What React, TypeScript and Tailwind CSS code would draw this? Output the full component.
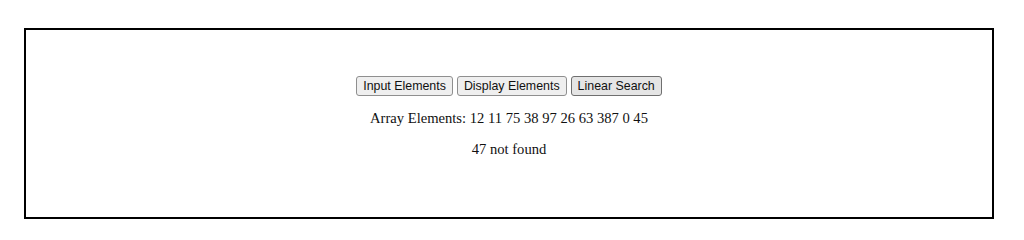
import React from 'react'

const btn =
  "inline-block px-[6px] h-[20px] border border-[#8f8f8f] rounded-[3px] bg-[#efefef] text-[12.4px] leading-[18px] text-[#111] font-['Liberation_Sans',Arial,sans-serif]"

export default function App() {
  const arr = [12, 11, 75, 38, 97, 26, 63, 387, 0, 45]
  return (
    <div className="w-[1024px] h-[240px] bg-white pt-[28px] pl-[24px]">
      <div className="w-[970px] h-[191px] border-2 border-black flex flex-col items-center pt-[46px] font-['Liberation_Serif','Times_New_Roman',serif] text-[14.6px] text-[#111]">
        <div className="flex gap-[4px]">
          <button className={btn}>Input Elements</button>
          <button className={btn}>Display Elements</button>
          <button className={btn + " !bg-[#e5e5e5] !border-[#6f6f6f]"}>Linear Search</button>
        </div>
        <p className="mt-[14px] leading-[17px]">Array Elements: {arr.join(' ')}</p>
        <p className="mt-[14px] leading-[17px]">47 not found</p>
      </div>
    </div>
  )
}
